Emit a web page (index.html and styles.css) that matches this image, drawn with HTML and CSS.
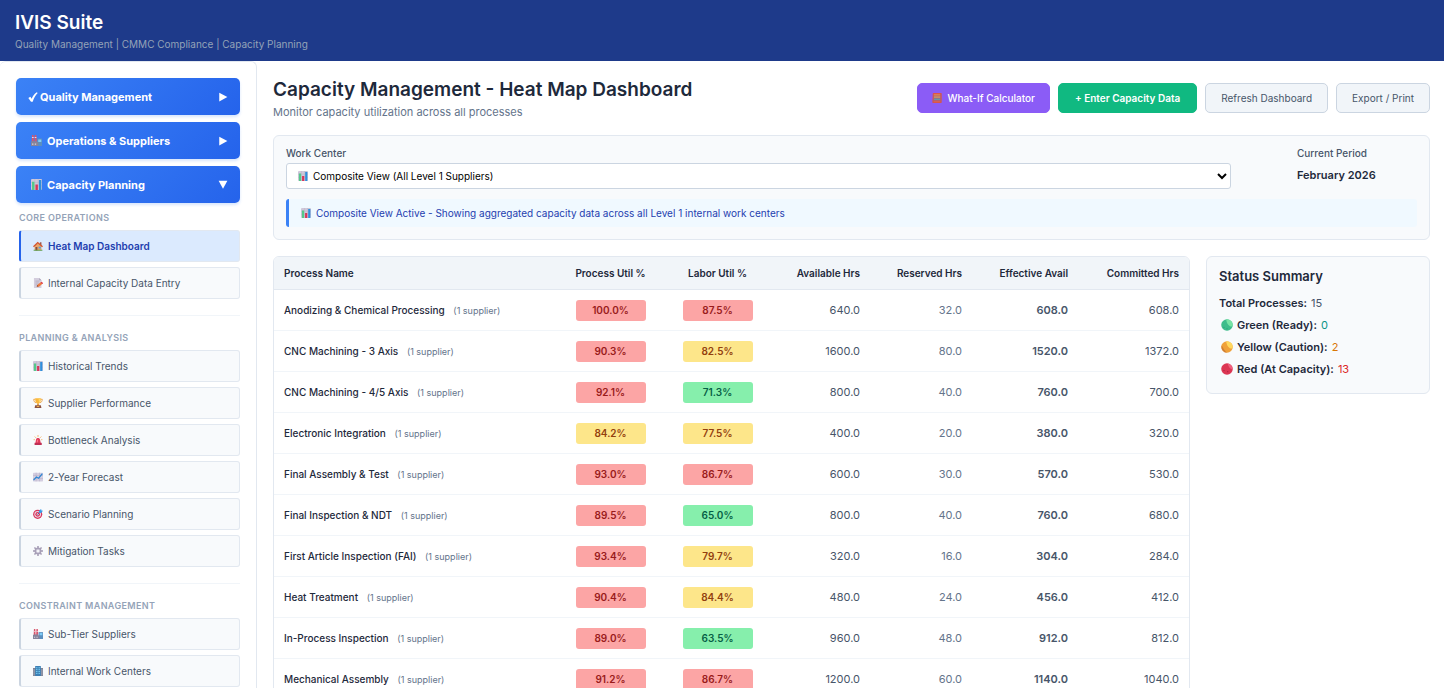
FILE: index.html
```html
<!DOCTYPE html>
<html lang="en">
<head>
  <meta charset="UTF-8">
  <meta name="viewport" content="width=device-width, initial-scale=1.0">
  <title>IVIS Suite</title>
  <link rel="stylesheet" href="styles.css">
</head>
<body>
  <!-- Icon set -->
  <svg class="icon-defs" aria-hidden="true">
    <symbol id="i-check" viewBox="0 0 16 16"><path d="M.5 9.600 3.800 7.500l2 3.200C7.800 6.300 10.300 2.800 14 .3l1.500 1.200C12 5 9.600 9.500 7.500 15.500H4.800z" fill="#fff"/></symbol>
    <symbol id="i-right" viewBox="0 0 16 16"><path d="M2 1v14l13-7z" fill="#fff"/></symbol>
    <symbol id="i-down" viewBox="0 0 16 16"><path d="M1 1h14L8 14z" fill="#fff"/></symbol>
    <symbol id="i-factory" viewBox="0 0 16 16"><path d="M1.500 0h2.200l.5 10H1zM5.500 0h2.200l.8 10H5z" fill="#d9546b"/><path d="M1.400 3h2.500v1.500H1.300zM5.400 3h2.500v1.500H5.300z" fill="#efd3dc"/><path d="M9 5h7v11H9z" fill="#5a8fc0"/><path d="M10.500 6.500H15V10h-4.500z" fill="#7fcdf7"/><path d="M0 9.500 4 8v1.500L8 8v2h2.500v6H0z" fill="#85839a"/><path d="M1.500 12.500h2V14h-2zM5.500 12.500h2V14h-2z" fill="#d5d2de"/></symbol>
    <symbol id="i-bars" viewBox="0 0 16 16"><rect width="16" height="16" rx="1.500" fill="#cfc8da"/><path d="M0 5h16M0 10h16M5.500 0v16M10.500 0v16" stroke="#b5aec4" stroke-width=".6"/><path d="M1.500 4h3.500v12H1.500z" fill="#55c98a"/><path d="M6.500 8H10v8H6.500z" fill="#d9355a"/><path d="M11.500 1.500H15V16h-3.500z" fill="#2f8fdc"/></symbol>
    <symbol id="i-house" viewBox="0 0 16 16"><path d="M11 2h2.500v5H11z" fill="#9a5a50"/><path d="M2.500 7.500 8 3l5.500 4.500V15h-11z" fill="#e8a56a"/><path d="M0 8.500 7.500 1 16 8.500l-1.500 1.300L7.700 4 1.500 10z" fill="#d4552f"/><path d="M4 9.500h3V15H4z" fill="#8a4a3c"/><path d="M9 9h3.500v3H9z" fill="#4aa4e8"/><path d="M1 14h14v1.500H1z" fill="#62a357"/></symbol>
    <symbol id="i-memo" viewBox="0 0 16 16"><path d="M1.500 0H10l3.500 3.500V16h-12z" fill="#d3cddd"/><path d="M10 0v3.500h3.500z" fill="#aaa2b8"/><path d="M4 5h6M4 8h5M4 11h3" stroke="#a9a1b8"/><path d="m6 14 1-3.200L13.500 6 16 8.500 9.500 14z" fill="#f07a3c"/><path d="m12.300 7 1.500-1.200L16 8.300l-1.400 1.400z" fill="#d93a5c"/><path d="m6 14 .8-2.800 2 2z" fill="#7a4a35"/></symbol>
    <symbol id="i-trophy" viewBox="0 0 16 16"><path d="M4 2H1.200c0 3.500 1.300 5 3.600 5.400M12 2h2.800c0 3.500-1.300 5-3.600 5.400" fill="none" stroke="#e9982f" stroke-width="1.300"/><path d="M3.500.5h9C12.500 6 11.500 9 8 9.500 4.500 9 3.500 6 3.500.5z" fill="#fbb83a"/><path d="M9 1h3c0 3-.5 5.500-2.500 7z" fill="#ffd766"/><path d="M7 9h2l.6 3H6.400z" fill="#d98422"/><path d="M3.500 11.500h9L13.500 16h-11z" fill="#8a5140"/><path d="M6 12.800h4v1.500H6z" fill="#f0b348"/></symbol>
    <symbol id="i-siren" viewBox="0 0 16 16"><path d="M3.800 13 5 6.500C5.500 4 10.500 4 11 6.500l1.500 6.500z" fill="#e23c5c"/><path d="M6.500 7.500h1.300L7.500 12H6z" fill="#ff8095"/><path d="M2.500 12.500H14V16H2.500z" fill="#c02f55"/><path d="M8 0v3M2.800 2.500l2 2M13.200 2.500l-2 2M1 7.500h2M13 7.500h2" stroke="#f4a64a" stroke-width="1.300"/></symbol>
    <symbol id="i-trend" viewBox="0 0 16 16"><rect y="1" width="16" height="14" rx="1" fill="#d4cee0"/><path d="M0 5.500h16M0 10.500h16M5 1v14M10.500 1v14" stroke="#b3abc4" stroke-width=".8"/><path d="m.8 13 4.700-5 3.500 2L15 2.500" fill="none" stroke="#2d86d4" stroke-width="2"/></symbol>
    <symbol id="i-target" viewBox="0 0 16 16"><circle cx="7.500" cy="8.500" r="7.300" fill="#d9345b"/><circle cx="7.500" cy="8.500" r="5.300" fill="#ead9e4"/><circle cx="7.500" cy="8.500" r="3.700" fill="#d9345b"/><circle cx="7.500" cy="8.500" r="1.700" fill="#f3e4ec"/><path d="m7 9 5-5" stroke="#3c5f9a" stroke-width="1.300"/><path d="m9.500 6.500.3-4L13 0l.5 2.200 2.500.5-3 3.500z" fill="#3a9be8"/></symbol>
    <symbol id="i-gear" viewBox="0 0 16 16"><path d="M8 0v16M0 8h16M2.300 2.300l11.400 11.400M13.700 2.300 2.300 13.700" stroke="#a39bb3" stroke-width="2.400"/><circle cx="8" cy="8" r="4.500" fill="#d5d0df" stroke="#a8a0b8" stroke-width="2.400"/><circle cx="8" cy="8" r="1.800" fill="#fafafc"/></symbol>
    <symbol id="i-office" viewBox="0 0 16 16"><path d="M0 3h5v13H0zM11 3h5v13h-5z" fill="#7e8294"/><path d="M3.500 0h9v16h-9z" fill="#3c7fb5"/><path d="M5.500 2v12M8 2v12M10.500 2v12" stroke="#79d4f7" stroke-width="1.400" stroke-dasharray="1.700 1.300"/><path d="M1.700 5v10M14.300 5v10" stroke="#b6bccb"/></symbol>
    <symbol id="i-abacus" viewBox="0 0 16 16"><path d="M2 0h13v16H1z" fill="#a0607f"/><path d="M2.800 3h10.500" stroke="#f08a45" stroke-width="2"/><path d="M2.800 6.500h10.500" stroke="#d9a05c" stroke-width="2"/><path d="M2.800 10h10.500" stroke="#5fa0a8" stroke-width="2"/><path d="M2.800 13.200h10.500" stroke="#e8604a" stroke-width="1.600"/><path d="M2 .8h12.500v14.400H1.500z" fill="none" stroke="#dc5548" stroke-width="1.600"/></symbol>
    <symbol id="i-green" viewBox="0 0 16 16"><circle cx="8" cy="8" r="7.700" fill="#3dbd8b"/><path d="M7 .5a7.500 7.500 0 0 1 8.300 9.500C12 11 7.500 7 7 .5z" fill="#77e3a4"/><circle cx="4" cy="11" r=".8" fill="#249a78"/><circle cx="8" cy="13" r=".8" fill="#249a78"/></symbol>
    <symbol id="i-yellow" viewBox="0 0 16 16"><circle cx="8" cy="8" r="7.700" fill="#f0a13a"/><path d="M7 .5a7.500 7.500 0 0 1 8.300 9.500C12 11 7.500 7 7 .5z" fill="#ffd85e"/><path d="M1 6a7.500 7.500 0 0 0 7 9.600C5 13 3 10 1 6z" fill="#cf7e35"/></symbol>
    <symbol id="i-red" viewBox="0 0 16 16"><circle cx="8" cy="8" r="7.700" fill="#dc3653"/><path d="M9 .6a7.500 7.500 0 0 1 6.300 8C12 8 9.500 4.500 9 .6z" fill="#f0607e"/><circle cx="4" cy="10" r=".8" fill="#a81e3f"/><circle cx="9" cy="11.500" r=".8" fill="#a81e3f"/></symbol>
  </svg>

  <header class="header">
    <h1>IVIS Suite</h1>
    <p>Quality Management | CMMC Compliance | Capacity Planning</p>
  </header>

  <div class="layout">
    <nav class="sidebar">
      <button class="nav-group"><svg class="icon check"><use href="#i-check"/></svg><span>Quality Management</span><svg class="arrow"><use href="#i-right"/></svg></button>
      <button class="nav-group"><svg class="icon group-icon"><use href="#i-factory"/></svg><span>Operations &amp; Suppliers</span><svg class="arrow"><use href="#i-right"/></svg></button>
      <button class="nav-group"><svg class="icon group-icon"><use href="#i-bars"/></svg><span>Capacity Planning</span><svg class="arrow"><use href="#i-down"/></svg></button>

      <div class="nav-section">
        <h3>Core Operations</h3>
        <a href="#" class="nav-item active"><svg class="icon"><use href="#i-house"/></svg>Heat Map Dashboard</a>
        <a href="#" class="nav-item"><svg class="icon"><use href="#i-memo"/></svg>Internal Capacity Data Entry</a>
      </div>

      <div class="nav-section">
        <h3>Planning &amp; Analysis</h3>
        <a href="#" class="nav-item"><svg class="icon"><use href="#i-bars"/></svg>Historical Trends</a>
        <a href="#" class="nav-item"><svg class="icon"><use href="#i-trophy"/></svg>Supplier Performance</a>
        <a href="#" class="nav-item"><svg class="icon"><use href="#i-siren"/></svg>Bottleneck Analysis</a>
        <a href="#" class="nav-item"><svg class="icon"><use href="#i-trend"/></svg>2-Year Forecast</a>
        <a href="#" class="nav-item"><svg class="icon"><use href="#i-target"/></svg>Scenario Planning</a>
        <a href="#" class="nav-item"><svg class="icon"><use href="#i-gear"/></svg>Mitigation Tasks</a>
      </div>

      <div class="nav-section">
        <h3>Constraint Management</h3>
        <a href="#" class="nav-item"><svg class="icon"><use href="#i-factory"/></svg>Sub-Tier Suppliers</a>
        <a href="#" class="nav-item"><svg class="icon"><use href="#i-office"/></svg>Internal Work Centers</a>
      </div>
    </nav>

    <main class="main">
      <div class="page-header">
        <div>
          <h2>Capacity Management - Heat Map Dashboard</h2>
          <p>Monitor capacity utilization across all processes</p>
        </div>
        <div class="actions">
          <button class="btn btn-purple"><svg class="icon"><use href="#i-abacus"/></svg>What-If Calculator</button>
          <button class="btn btn-green">+ Enter Capacity Data</button>
          <button class="btn">Refresh Dashboard</button>
          <button class="btn">Export / Print</button>
        </div>
      </div>

      <div class="filters">
        <div class="filter-row">
          <div class="field">
            <label for="workCenter">Work Center</label>
            <div class="select-wrap">
              <select id="workCenter">
                <option>Composite View (All Level 1 Suppliers)</option>
              </select>
              <svg class="icon select-icon"><use href="#i-bars"/></svg>
            </div>
          </div>
          <div class="period">
            <span class="period-label">Current Period</span>
            <strong>February 2026</strong>
          </div>
        </div>
        <div class="notice"><svg class="icon"><use href="#i-bars"/></svg>Composite View Active - Showing aggregated capacity data across all Level 1 internal work centers</div>
      </div>

      <div class="content">
        <div class="table-card">
          <table>
            <thead>
              <tr>
                <th class="name">Process Name</th>
                <th class="util">Process Util %</th>
                <th class="util">Labor Util %</th>
                <th class="avail">Available Hrs</th>
                <th class="reserved">Reserved Hrs</th>
                <th class="effective">Effective Avail</th>
                <th class="committed">Committed Hrs</th>
              </tr>
            </thead>
            <tbody>
              <tr><td class="name">Anodizing &amp; Chemical Processing <small>(1 supplier)</small></td><td class="util"><span class="badge red">100.0%</span></td><td class="util"><span class="badge red">87.5%</span></td><td>640.0</td><td class="muted">32.0</td><td class="strong">608.0</td><td>608.0</td></tr>
              <tr><td class="name">CNC Machining - 3 Axis <small>(1 supplier)</small></td><td class="util"><span class="badge red">90.3%</span></td><td class="util"><span class="badge yellow">82.5%</span></td><td>1600.0</td><td class="muted">80.0</td><td class="strong">1520.0</td><td>1372.0</td></tr>
              <tr><td class="name">CNC Machining - 4/5 Axis <small>(1 supplier)</small></td><td class="util"><span class="badge red">92.1%</span></td><td class="util"><span class="badge green">71.3%</span></td><td>800.0</td><td class="muted">40.0</td><td class="strong">760.0</td><td>700.0</td></tr>
              <tr><td class="name">Electronic Integration <small>(1 supplier)</small></td><td class="util"><span class="badge yellow">84.2%</span></td><td class="util"><span class="badge yellow">77.5%</span></td><td>400.0</td><td class="muted">20.0</td><td class="strong">380.0</td><td>320.0</td></tr>
              <tr><td class="name">Final Assembly &amp; Test <small>(1 supplier)</small></td><td class="util"><span class="badge red">93.0%</span></td><td class="util"><span class="badge red">86.7%</span></td><td>600.0</td><td class="muted">30.0</td><td class="strong">570.0</td><td>530.0</td></tr>
              <tr><td class="name">Final Inspection &amp; NDT <small>(1 supplier)</small></td><td class="util"><span class="badge red">89.5%</span></td><td class="util"><span class="badge green">65.0%</span></td><td>800.0</td><td class="muted">40.0</td><td class="strong">760.0</td><td>680.0</td></tr>
              <tr><td class="name">First Article Inspection (FAI) <small>(1 supplier)</small></td><td class="util"><span class="badge red">93.4%</span></td><td class="util"><span class="badge yellow">79.7%</span></td><td>320.0</td><td class="muted">16.0</td><td class="strong">304.0</td><td>284.0</td></tr>
              <tr><td class="name">Heat Treatment <small>(1 supplier)</small></td><td class="util"><span class="badge red">90.4%</span></td><td class="util"><span class="badge yellow">84.4%</span></td><td>480.0</td><td class="muted">24.0</td><td class="strong">456.0</td><td>412.0</td></tr>
              <tr><td class="name">In-Process Inspection <small>(1 supplier)</small></td><td class="util"><span class="badge red">89.0%</span></td><td class="util"><span class="badge green">63.5%</span></td><td>960.0</td><td class="muted">48.0</td><td class="strong">912.0</td><td>812.0</td></tr>
              <tr><td class="name">Mechanical Assembly <small>(1 supplier)</small></td><td class="util"><span class="badge red">91.2%</span></td><td class="util"><span class="badge red">86.7%</span></td><td>1200.0</td><td class="muted">60.0</td><td class="strong">1140.0</td><td>1040.0</td></tr>
            </tbody>
          </table>
        </div>

        <aside class="summary">
          <h3>Status Summary</h3>
          <p><strong>Total Processes:</strong> 15</p>
          <p class="ready"><svg class="icon"><use href="#i-green"/></svg><strong>Green (Ready):</strong> 0</p>
          <p class="caution"><svg class="icon"><use href="#i-yellow"/></svg><strong>Yellow (Caution):</strong> 2</p>
          <p class="full"><svg class="icon"><use href="#i-red"/></svg><strong>Red (At Capacity):</strong> 13</p>
        </aside>
      </div>
    </main>
  </div>
</body>
</html>
```
FILE: styles.css
```css
* {
  box-sizing: border-box;
}
body {
  margin: 0;
  height: 100vh;
  overflow: hidden;
  display: flex;
  flex-direction: column;
  font-family: Inter, "Liberation Sans", sans-serif;
  font-size: 11px;
  line-height: 16px;
  color: #475569;
  background: #fff;
}
h1, h2, h3, p {
  margin: 0;
}
button, select {
  font-family: inherit;
}
.icon-defs {
  position: absolute;
  width: 0;
  height: 0;
}
.icon {
  width: 10px;
  height: 10px;
  flex: none;
}

/* Header */
.header {
  background: #1e3a8a;
  padding: 11px 15px 9px;
}
.header h1 {
  font-size: 19px;
  line-height: 24px;
  font-weight: 600;
  color: #fff;
}
.header p {
  margin-top: 1px;
  font-size: 10px;
  color: #94a3b8;
}

.layout {
  display: flex;
  flex: 1;
  min-height: 0;
}

/* Sidebar */
.sidebar {
  width: 257px;
  flex: none;
  overflow: hidden;
  padding: 16px 16px 0;
  border: 1px solid #e2e8f0;
  border-width: 1px 1px 0 0;
  border-radius: 6px 6px 0 0;
}
.nav-group {
  display: flex;
  align-items: center;
  width: 100%;
  height: 37px;
  margin-bottom: 7px;
  padding: 0 12px;
  border: none;
  border-radius: 5px;
  background: linear-gradient(135deg, #3b82f6, #2563eb);
  box-shadow: 0 2px 3px rgba(59, 130, 246, 0.2);
  color: #fff;
  font-size: 11px;
  font-weight: 700;
  cursor: pointer;
}
.nav-group .group-icon {
  width: 11px;
  height: 11px;
  margin: 0 5px 0 3px;
}
.nav-group .check {
  margin-right: 2px;
}
.nav-group .arrow {
  width: 10px;
  height: 10px;
  margin-left: auto;
}
.nav-section {
  margin-left: 3px;
}
.nav-section + .nav-section {
  margin-top: 16px;
  padding-top: 14px;
  border-top: 1px solid #f1f5f9;
}
.nav-section h3 {
  margin-bottom: 4px;
  font-size: 9px;
  line-height: 16px;
  font-weight: 600;
  letter-spacing: 0.04em;
  text-transform: uppercase;
  color: #94a3b8;
}
.nav-item {
  display: flex;
  align-items: center;
  gap: 5px;
  height: 32px;
  padding: 0 12px;
  border: 1px solid #e2e8f0;
  border-left: 2px solid #cbd5e1;
  border-radius: 3px;
  background: #f8fafc;
  color: #475569;
  font-size: 10px;
  text-decoration: none;
}
.nav-item + .nav-item {
  margin-top: 5px;
}
.nav-item.active {
  border-left-color: #2563eb;
  background: #dbeafe;
  color: #1e40af;
  font-weight: 600;
}

/* Main */
.main {
  flex: 1;
  min-width: 0;
  padding: 16px 14px 0 16px;
}
.page-header {
  display: flex;
  justify-content: space-between;
  align-items: flex-start;
  margin-bottom: 15px;
}
.page-header h2 {
  font-size: 19px;
  line-height: 25px;
  font-weight: 600;
  color: #1e293b;
}
.page-header p {
  margin-top: 2px;
  color: #64748b;
}
.actions {
  display: flex;
  gap: 8px;
  margin-top: 6px;
}
.btn {
  display: flex;
  align-items: center;
  gap: 5px;
  height: 30px;
  padding: 0 15px;
  border: 1px solid #cbd5e1;
  border-radius: 5px;
  background: #f1f5f9;
  color: #475569;
  font-size: 10px;
  cursor: pointer;
}
.btn-purple {
  padding: 0 14px;
  border-color: #8b5cf6;
  background: #8b5cf6;
  color: #fff;
  font-weight: 500;
}
.btn-green {
  padding: 0 16px;
  border-color: #10b981;
  background: #10b981;
  color: #fff;
  font-weight: 600;
}

/* Filters */
.filters {
  padding: 9px 12px 12px;
  border: 1px solid #e2e8f0;
  border-radius: 6px;
  background: #f8fafc;
}
.filter-row {
  display: flex;
  gap: 66px;
}
.field {
  flex: 1;
}
.field label, .period-label {
  display: block;
  margin-bottom: 2px;
  font-size: 10px;
  font-weight: 500;
}
.select-wrap {
  position: relative;
}
.select-wrap select {
  display: block;
  width: 100%;
  height: 26px;
  padding: 0 0 0 22px;
  border: 1px solid #cbd5e1;
  border-radius: 3px;
  background: #fff;
  color: #000;
  font-size: 10px;
}
.select-icon {
  position: absolute;
  left: 12px;
  top: 8px;
}
.period {
  width: 120px;
}
.period strong {
  display: block;
  margin-top: 6px;
  font-weight: 600;
  color: #1e293b;
}
.notice {
  display: flex;
  align-items: center;
  gap: 5px;
  height: 28px;
  margin-top: 10px;
  padding: 0 12px;
  border-left: 3px solid #3b82f6;
  border-radius: 3px;
  background: #f0f9ff;
  color: #1e40af;
  font-size: 10px;
}

/* Table and summary */
.content {
  display: flex;
  align-items: flex-start;
  gap: 16px;
  margin-top: 16px;
}
.table-card {
  flex: 1;
  overflow: hidden;
  border: 1px solid #e2e8f0;
  border-radius: 6px;
}
table {
  width: 100%;
  table-layout: fixed;
  border-spacing: 0;
}
th, td {
  padding: 0 10px;
  text-align: right;
}
th {
  height: 33px;
  background: #f1f5f9;
  border-bottom: 1px solid #e2e8f0;
  font-weight: 600;
  font-size: 10px;
  color: #1e293b;
}
td {
  height: 41px;
  border-bottom: 1px solid #f1f5f9;
}
.name {
  text-align: left;
}
td.name {
  font-size: 10px;
  font-weight: 500;
  color: #1e293b;
}
td small {
  margin-left: 6px;
  font-size: 9px;
  font-weight: 400;
  color: #64748b;
}
.util {
  width: 107px;
  text-align: center;
}
.avail {
  width: 99px;
}
.reserved {
  width: 102px;
}
.effective {
  width: 106px;
}
.committed {
  width: 111px;
}
.muted {
  color: #64748b;
}
.strong {
  font-weight: 600;
}
.badge {
  display: inline-block;
  width: 70px;
  border-radius: 3px;
  font-size: 10px;
  line-height: 21px;
  font-weight: 600;
  text-align: center;
}
.badge.red {
  background: #fca5a5;
  color: #991b1b;
}
.badge.yellow {
  background: #fde68a;
  color: #92400e;
}
.badge.green {
  background: #86efac;
  color: #065f46;
}

.summary {
  width: 224px;
  padding: 9px 12px 13px;
  border: 1px solid #e2e8f0;
  border-radius: 6px;
  background: #f8fafc;
}
.summary h3 {
  margin-bottom: 6px;
  font-size: 13px;
  line-height: 20px;
  font-weight: 600;
  color: #1e293b;
}
.summary p {
  display: flex;
  align-items: center;
  gap: 4px;
  line-height: 22px;
}
.summary strong {
  font-weight: 600;
  color: #1e293b;
}
.summary .icon {
  width: 12px;
  height: 12px;
  margin-left: 2px;
}
.ready {
  color: #0d9488;
}
.caution {
  color: #d97706;
}
.full {
  color: #dc2626;
}
```
